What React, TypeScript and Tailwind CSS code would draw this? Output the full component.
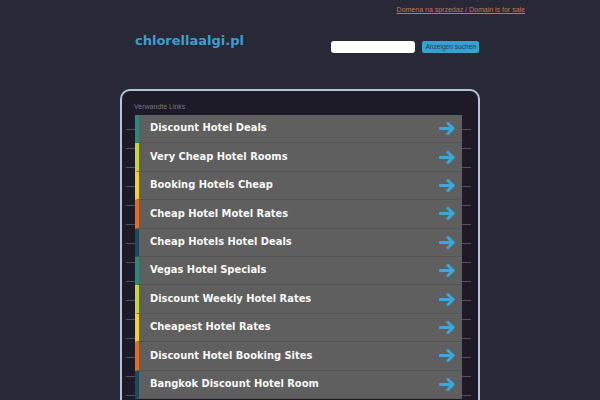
const links = [
  { label: 'Discount Hotel Deals', color: 'border-l-[#2a8a76]' },
  { label: 'Very Cheap Hotel Rooms', color: 'border-l-[#c6d932]' },
  { label: 'Booking Hotels Cheap', color: 'border-l-[#f2d12a]' },
  { label: 'Cheap Hotel Motel Rates', color: 'border-l-[#e26f1e]' },
  { label: 'Cheap Hotels Hotel Deals', color: 'border-l-[#1d4a5a]' },
  { label: 'Vegas Hotel Specials', color: 'border-l-[#2a8a76]' },
  { label: 'Discount Weekly Hotel Rates', color: 'border-l-[#c6d932]' },
  { label: 'Cheapest Hotel Rates', color: 'border-l-[#f2d12a]' },
  { label: 'Discount Hotel Booking Sites', color: 'border-l-[#e26f1e]' },
  { label: 'Bangkok Discount Hotel Room', color: 'border-l-[#1d4a5a]' },
];

const Arrow = () => (
  <svg width="17" height="13" viewBox="0 0 17 13" fill="none">
    <path d="M1 6.5h13M9 1.5l5.2 5-5.2 5" stroke="#3aa8dc" strokeWidth="3" strokeLinecap="round" strokeLinejoin="round" />
  </svg>
);

const Ticks = () => (
  <div className="w-[9px] self-stretch bg-[image:repeating-linear-gradient(transparent_0_14px,#50505a_14px_15px,transparent_15px_19px)]"></div>
);

export default function App() {
  return (
    <div className="min-h-[400px] h-[400px] overflow-hidden bg-[#292837] font-['Liberation_Sans',sans-serif]">
      <div className="w-[450px] mx-auto flex justify-end pt-[5px]">
        <a href="#" className="text-[7px] leading-[9px] text-[#c9773f] underline">Domena na sprzedaz / Domain is for sale</a>
      </div>

      <div className="w-[360px] mx-auto">
        <div className="flex items-start justify-between pl-[15px] pt-[18px] pr-[1px]">
          <div className="font-['DejaVu_Sans',sans-serif] font-bold text-[13px] leading-[16px] text-[#3b9fd1] mt-[1px]">chlorellaalgi.pl</div>
          <div className="flex items-center gap-[7px] mt-[9px]">
            <div className="w-[84px] h-[12px] bg-white rounded-[3px]"></div>
            <div className="h-[12px] px-[3px] bg-[#38a0d2] rounded-[2px] text-[6.6px] leading-[12px] text-[#1d3d5c]">Anzeigen suchen</div>
          </div>
        </div>

        <div className="mt-[36px] border-2 border-[#b3c6d6] rounded-[10px] bg-[#1c1b27] pt-[11px] pb-4">
          <div className="pl-[12px] text-[7px] leading-[9px] text-[#777784]">Verwandte Links</div>
          <div className="flex mt-[4px]">
            <div className="w-[13px] flex justify-end"><Ticks /></div>
            <div className="w-[327px] flex flex-col">
              {links.map((l) => (
                <div key={l.label} className={`h-[28.4px] flex items-center justify-between bg-[#5f5f5f] border-l-4 border-b border-b-[#555555] ${l.color} pl-[11px] pr-[6px]`}>
                  <span className="font-['DejaVu_Sans_Condensed','DejaVu_Sans',sans-serif] font-bold text-[11px] text-[#f7f7f7]">{l.label}</span>
                  <Arrow />
                </div>
              ))}
            </div>
            <Ticks />
          </div>
        </div>
      </div>
    </div>
  );
}
